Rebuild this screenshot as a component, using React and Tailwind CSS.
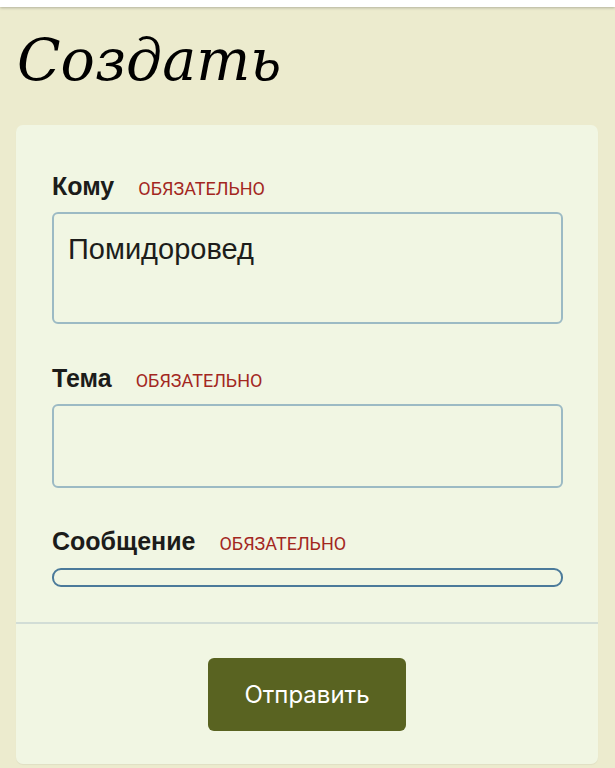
export default function App() {
  const label = "text-[25px] leading-[28px] font-bold text-[#1c1c1a] [font-family:'Liberation_Sans',Arial,sans-serif]";
  const req = "text-[18px] leading-[28px] uppercase text-[#a3271f] [font-family:Roboto,sans-serif]";
  return (
    <div className="w-[615px] h-[768px] bg-[#ecebce] overflow-hidden flex flex-col">
      <div className="h-[7px] bg-white shadow-[0_1px_3px_rgba(0,0,0,0.25)] shrink-0" />
      <div className="h-[118px] pl-[17px] pt-[15px] shrink-0">
        <h1 className="text-[57px] leading-[76px] italic text-black [font-family:'DejaVu_Serif',serif]">Создать</h1>
      </div>
      <div className="mx-[16px] w-[582px] h-[639px] bg-[#f1f6e3] rounded-[7px] flex flex-col shadow-[0_1px_1px_rgba(0,0,0,0.05)]">
        <div className="pl-[36px] pr-[35px] pt-[47px] flex flex-col">
          <div className="flex items-baseline gap-[24px] h-[28px]">
            <span className={label}>Кому</span>
            <span className={req}>обязательно</span>
          </div>
          <div className="mt-[12px] h-[112px] border-2 border-[#9cbac4] rounded-[6px] px-[14px] pt-[18px] text-[29px] text-[#1d1d1b] [font-family:'Liberation_Sans',Arial,sans-serif] leading-[34px]">
            Помидоровед
          </div>
          <div className="flex items-baseline gap-[24px] mt-[40px] h-[28px]">
            <span className={label}>Тема</span>
            <span className={req}>обязательно</span>
          </div>
          <div className="mt-[12px] h-[84px] border-2 border-[#9cbac4] rounded-[6px]" />
          <div className="flex items-baseline gap-[24px] mt-[39px] h-[28px]">
            <span className={label}>Сообщение</span>
            <span className={req}>обязательно</span>
          </div>
          <div className="mt-[13px] h-[19px] border-2 border-[#4b7a9a] rounded-[9px]" />
        </div>
        <div className="mt-[35px] h-[2px] bg-[#d2ddd6]" />
        <div className="flex justify-center pt-[34px]">
          <button className="w-[198px] h-[73px] bg-[#596321] rounded-[6px] text-white text-[24px] [font-family:Inter,sans-serif]">Отправить</button>
        </div>
      </div>
    </div>
  );
}
